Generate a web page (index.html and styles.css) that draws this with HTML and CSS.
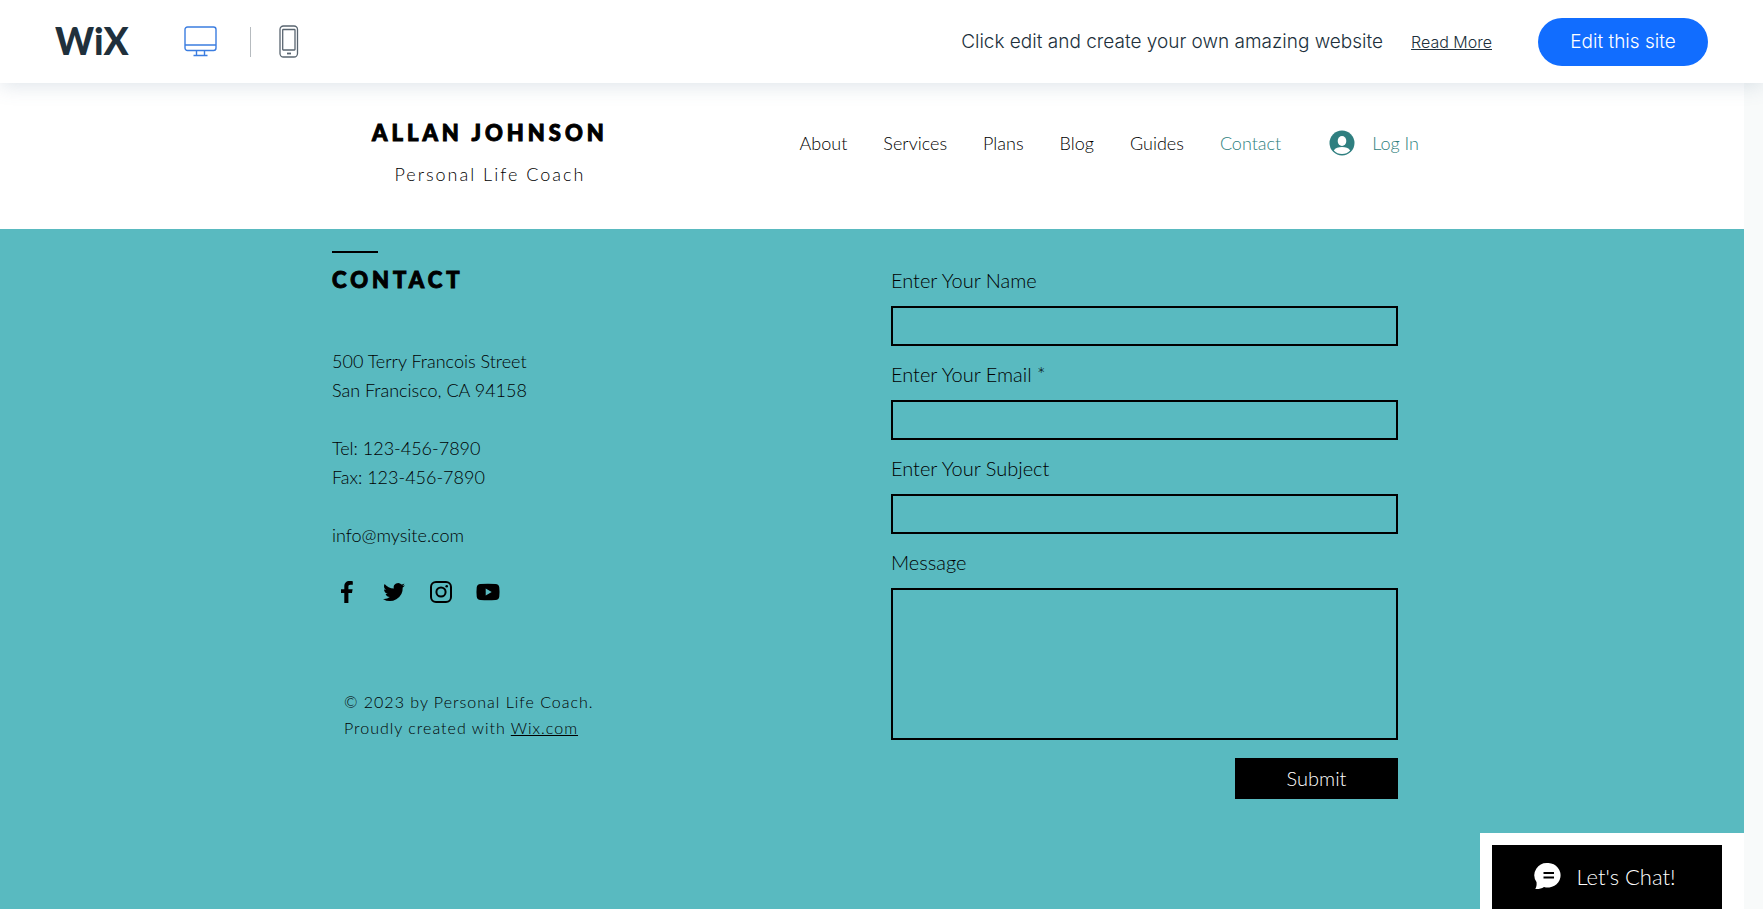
FILE: index.html
```html
<!DOCTYPE html>
<html lang="en">
<head>
<meta charset="utf-8">
<meta name="viewport" content="width=device-width, initial-scale=1">
<title>Contact | Allan Johnson</title>
<link rel="stylesheet" href="styles.css">
</head>
<body>
<div class="topbar">
  <a class="logo" href="#" aria-label="Wix">
    <svg width="84" height="52" viewBox="0 0 84 52"><text class="logo-text" x="0" y="39">WiX</text></svg>
  </a>
  <div class="devices">
    <button class="device device-active" type="button" aria-label="Desktop view">
      <svg width="33" height="31" viewBox="0 0 33 31" fill="none" stroke="currentColor" stroke-width="1.4"><rect x="1" y="1" width="31" height="23.500" rx="2.500"/><path d="M1 19h31M12.500 24.500v5M20.500 24.500v5M9.500 29.500h14"/></svg>
    </button>
    <span class="divider"></span>
    <button class="device" type="button" aria-label="Mobile view">
      <svg width="20" height="33" viewBox="0 0 20 33" fill="none" stroke="currentColor" stroke-width="1.3"><rect x="1" y="1" width="17.500" height="31" rx="3.500"/><rect x="3.700" y="4.500" width="12.300" height="20.500" rx=".5"/><path d="M8 28.500h4" stroke-width="1.800"/></svg>
    </button>
  </div>
  <p class="promo">Click edit and create your own amazing website</p>
  <a class="read-more" href="#">Read More</a>
  <a class="edit" href="#">Edit this site</a>
</div>
<div class="page">
  <header class="header">
    <div class="wrap header-row">
      <div class="brand">
        <h1 class="title">ALLAN JOHNSON</h1>
        <p class="tagline">Personal Life Coach</p>
      </div>
      <nav class="nav">
        <a href="#">About</a>
        <a href="#">Services</a>
        <a href="#">Plans</a>
        <a href="#">Blog</a>
        <a href="#">Guides</a>
        <a class="current" href="#">Contact</a>
        <button class="login" type="button">
          <svg width="26" height="26" viewBox="0 0 26 26"><circle cx="13" cy="13" r="12.500" fill="currentColor"/><ellipse cx="13" cy="11" rx="4.300" ry="5" fill="#fff"/><path d="M4.800 20.500c1.500-2.600 4.700-3.500 8.200-3.500s6.700.9 8.200 3.500a11.300 11.300 0 0 1-16.400 0z" fill="#fff"/></svg>
          <span>Log In</span>
        </button>
      </nav>
    </div>
  </header>
  <main class="main">
    <div class="wrap contact-grid">
      <section class="info">
        <h2 class="title contact-title">CONTACT</h2>
        <address class="address">
          <p>500 Terry Francois Street<br>San Francisco, CA 94158</p>
          <p>Tel: 123-456-7890<br>Fax: 123-456-7890</p>
          <p><a href="#">info@mysite.com</a></p>
        </address>
        <div class="social">
          <a href="#" aria-label="Facebook"><svg width="24" height="24" viewBox="0 0 24 24"><path d="M9.300 23V13H6V9.300h3.300V6.400C9.300 3 11.300 1 14.500 1c1.500 0 2.900.1 3.300.2v3.500h-2.300c-1.800 0-2.100.9-2.100 2.100v2.500h4.200L17 13h-3.600v10z"/></svg></a>
          <a href="#" aria-label="Twitter"><svg width="24" height="24" viewBox="0 0 24 24"><path d="M23 5.200c-.8.400-1.700.6-2.600.7.900-.6 1.600-1.400 2-2.500-.9.500-1.800.9-2.900 1.100A4.500 4.500 0 0 0 11.800 8.600C8.100 8.400 4.800 6.600 2.600 3.900c-1.200 2-.6 4.700 1.400 6-.7 0-1.400-.2-2-.6 0 2.200 1.500 4.100 3.600 4.500-.7.200-1.400.2-2 .1.600 1.800 2.200 3.100 4.200 3.100A9.100 9.100 0 0 1 1 18.900 12.800 12.800 0 0 0 20.700 7.500c.9-.6 1.700-1.400 2.300-2.300z"/></svg></a>
          <a href="#" aria-label="Instagram"><svg width="24" height="24" viewBox="0 0 24 24"><rect x="2" y="2" width="20" height="20" rx="5" fill="none" stroke="#000" stroke-width="2"/><circle cx="12" cy="12" r="4.600" fill="none" stroke="#000" stroke-width="2"/><circle cx="17.700" cy="6.300" r="1.300"/></svg></a>
          <a href="#" aria-label="YouTube"><svg width="24" height="24" viewBox="0 0 24 24"><path fill-rule="evenodd" d="M4.500 4Q12 3.300 19.500 4 23 4.200 23.300 7.500q.5 4.500 0 9Q23 19.800 19.500 20q-7.500.7-15 0Q1 19.800.7 16.500q-.5-4.500 0-9Q1 4.200 4.500 4zM9.700 8.500v7L15.700 12z"/></svg></a>
        </div>
        <p class="copyright">© 2023 by Personal Life Coach.<br>Proudly created with <a href="#">Wix.com</a></p>
      </section>
      <form class="form">
        <label for="name">Enter Your Name</label>
        <input id="name" type="text">
        <label for="email">Enter Your Email *</label>
        <input id="email" type="email" required>
        <label for="subject">Enter Your Subject</label>
        <input id="subject" type="text">
        <label for="message">Message</label>
        <textarea id="message"></textarea>
        <button class="submit" type="submit">Submit</button>
      </form>
    </div>
  </main>
</div>
<div class="chat-frame">
  <button class="chat" type="button">
    <svg width="28" height="28" viewBox="0 0 28 28"><path d="M14.500 1a12.700 12.300 0 1 1-4.500 24c-2.500 1.500-5 2.200-8.700 2 1.200-2.200 1.500-4 1.200-7A12.700 12.300 0 0 1 14.500 1z" fill="#fff"/><path d="M9.500 11h10.500M9.500 15.500h10.500" stroke="#000" stroke-width="2"/></svg>
    <span>Let's Chat!</span>
  </button>
</div>
</body>
</html>
```
FILE: styles.css
```css
* { box-sizing: border-box; }
html, body { height: 100%; }
body {
  margin: 0;
  display: flex;
  flex-direction: column;
  overflow: hidden;
  background: #f8fafa;
  color: #000;
  font-family: Lato, "Open Sans", sans-serif;
  font-weight: 300;
}
h1, h2, p { margin: 0; }
a { color: inherit; text-decoration: none; }
button { border: 0; padding: 0; background: none; color: inherit; font: inherit; cursor: pointer; }
svg { display: block; }

.topbar {
  position: relative;
  z-index: 2;
  display: flex;
  align-items: center;
  flex: none;
  height: 83px;
  padding: 0 55px;
  background: #fff;
  box-shadow: 0 2px 20px rgba(80, 110, 140, 0.2);
  color: #20303c;
  font-family: Inter, "Open Sans", sans-serif;
}
.logo-text { font: 900 37px Lato, sans-serif; fill: #20303c; }
.devices { display: flex; align-items: center; margin-left: 45px; }
.device { color: #596570; }
.device-active { color: #3b7de0; }
.divider { width: 1px; height: 30px; margin: 0 28px 0 33px; background: #b6bbbf; }
.promo { margin-left: auto; font-size: 19px; }
.read-more { margin-left: 28px; font-size: 16px; text-decoration: underline; }
.edit {
  width: 170px;
  margin-left: 46px;
  border-radius: 24px;
  background: #116dff;
  color: #fff;
  font-size: 19px;
  line-height: 48px;
  text-align: center;
}

.page { flex: 1; display: flex; flex-direction: column; margin-right: 19px; }
.wrap { width: 100%; max-width: 1102px; margin: 0 auto; }
.header { flex: none; height: 146px; background: #fff; }
.header-row { display: flex; justify-content: space-between; }
.brand { padding: 36px 0 0 51px; }
.title { font-size: 22px; font-weight: 900; line-height: 28px; letter-spacing: 4px; -webkit-text-stroke: 1px #000; }
.tagline { margin-top: 13px; font-size: 18px; line-height: 28px; letter-spacing: 2px; text-align: center; }
.nav { display: flex; align-items: center; gap: 36px; height: 26px; margin: 47px 4px 0 0; font-size: 18px; }
.current, .login { color: #2f7f80; }
.login { display: flex; align-items: center; gap: 17px; margin-left: 12px; }

.main { flex: 1; background: #59bac0; }
.contact-grid { display: flex; justify-content: space-between; padding: 22px 25px 0 11px; }
.contact-title::before { content: ""; display: block; width: 46px; height: 2px; margin-bottom: 13px; background: #000; }
.address { margin-top: 53px; font-size: 18px; font-style: normal; line-height: 29px; }
.address p + p { margin-top: 29px; }
.social { display: flex; gap: 23px; margin: 30px 0 0 3px; }
.copyright { margin: 85px 0 0 12px; font-size: 16px; line-height: 26px; letter-spacing: 1px; }
.copyright a { text-decoration: underline; }
.form { display: flex; flex-direction: column; width: 507px; padding-top: 17px; font-size: 20px; }
.form label { line-height: 24px; }
.form input, .form textarea {
  height: 40px;
  margin: 14px 0 16px;
  border: 2px solid #000;
  border-radius: 0;
  outline: 0;
  padding: 4px 10px;
  background: transparent;
  font: inherit;
  resize: none;
}
.form textarea { height: 152px; }
.submit { align-self: flex-end; width: 163px; height: 41px; margin-top: 2px; padding-bottom: 2px; background: #000; color: #fff; font-size: 20px; }

.chat-frame { position: fixed; right: 19px; bottom: 0; z-index: 3; padding: 12px 22px 0 12px; background: #fff; }
.chat { display: flex; align-items: center; justify-content: center; gap: 14px; width: 230px; height: 64px; padding: 0 4px 2px 0; background: #000; color: #fff; font-size: 22px; }
```
